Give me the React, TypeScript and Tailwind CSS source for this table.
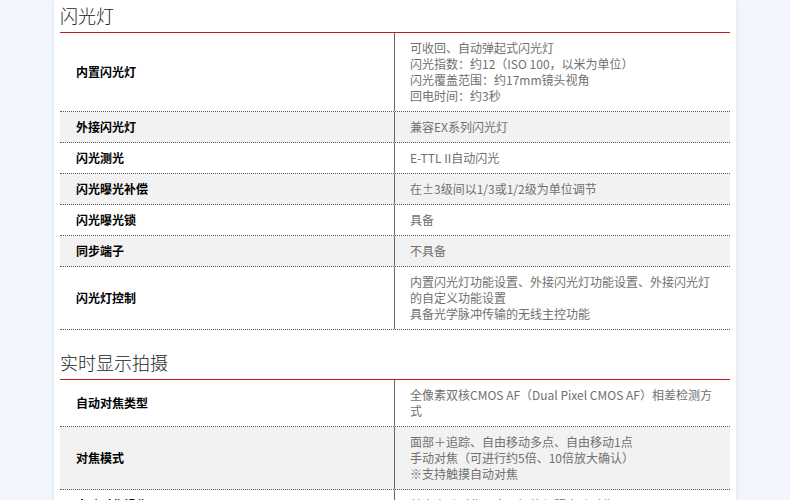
import React from 'react';

type Row = { label: string; lines: string[] };

const flashRows: Row[] = [
    {
        label: '内置闪光灯',
        lines: ['可收回、自动弹起式闪光灯', '闪光指数：约12（ISO 100，以米为单位）', '闪光覆盖范围：约17mm镜头视角', '回电时间：约3秒'],
    },
    { label: '外接闪光灯', lines: ['兼容EX系列闪光灯'] },
    { label: '闪光测光', lines: ['E-TTL II自动闪光'] },
    { label: '闪光曝光补偿', lines: ['在±3级间以1/3或1/2级为单位调节'] },
    { label: '闪光曝光锁', lines: ['具备'] },
    { label: '同步端子', lines: ['不具备'] },
    {
        label: '闪光灯控制',
        lines: ['内置闪光灯功能设置、外接闪光灯功能设置、外接闪光灯', '的自定义功能设置', '具备光学脉冲传输的无线主控功能'],
    },
];

const liveRows: Row[] = [
    { label: '自动对焦类型', lines: ['全像素双核CMOS AF（Dual Pixel CMOS AF）相差检测方', '式'] },
    {
        label: '对焦模式',
        lines: ['面部＋追踪、自由移动多点、自由移动1点', '手动对焦（可进行约5倍、10倍放大确认）', '※支持触摸自动对焦'],
    },
    { label: '自动对焦操作', lines: ['单次自动对焦、人工智能伺服自动对焦'] },
];

const SpecTable = ({ title, rows }: { title: string; rows: Row[] }) => {
    return (
        <div className="mb-[17px]">
            <h2 className="h-[32px] leading-[30px] text-[18px] font-light text-[#222]">{title}</h2>
            <div className="border-t border-[#c81a1a]">
                {rows.map((row, i) => (
                    <div
                        key={row.label}
                        className={`grid grid-cols-2 border-b border-dotted border-[#555] ${i % 2 === 1 ? 'bg-[#f2f2f2]' : 'bg-white'}`}
                    >
                        <div className="flex items-center border-r border-[#666] pl-4 text-[12px] font-bold text-black">
                            {row.label}
                        </div>
                        <div className="py-[7px] pl-[15px] pr-[15px] text-[12px] leading-4 text-[#707070] whitespace-nowrap">
                            {row.lines.map((line, j) => (
                                <div key={j}>{line}</div>
                            ))}
                        </div>
                    </div>
                ))}
            </div>
        </div>
    );
};

const App = () => {
    return (
        <div
            className="h-[500px] w-[790px] overflow-hidden bg-[#f3f7fd]"
            style={{ fontFamily: '"Noto Sans CJK SC", "Noto Sans", sans-serif' }}
        >
            <div className="ml-[54px] h-full w-[682px] bg-white px-[6px] shadow-[0_0_4px_rgba(180,195,220,0.5)]">
                <SpecTable title="闪光灯" rows={flashRows} />
                <SpecTable title="实时显示拍摄" rows={liveRows} />
            </div>
        </div>
    );
};

export default App;
